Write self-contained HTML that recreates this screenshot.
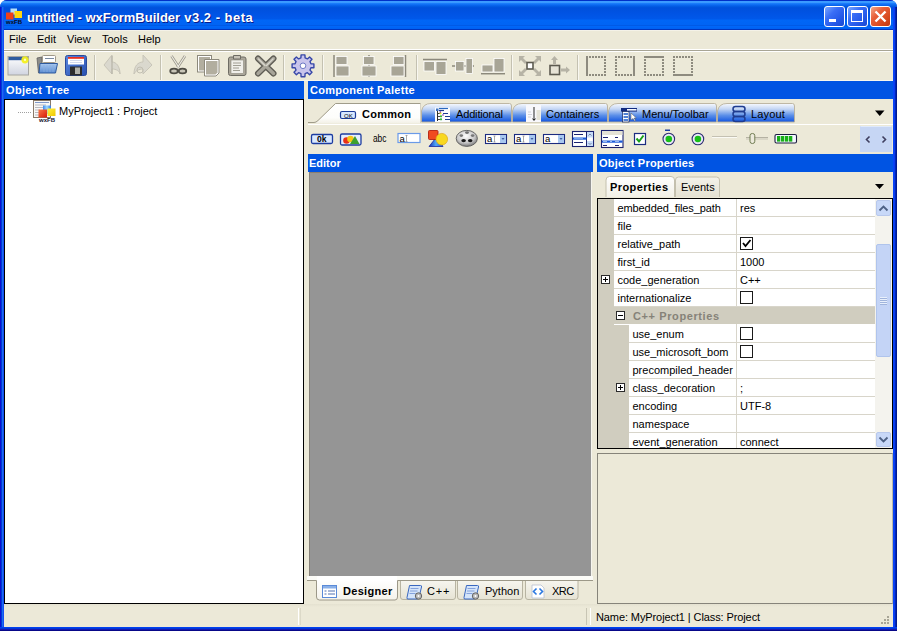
<!DOCTYPE html>
<html><head><meta charset="utf-8">
<style>
*{box-sizing:border-box;margin:0;padding:0}
html,body{width:897px;height:631px;overflow:hidden;background:#fff}
body{position:relative;font-family:"Liberation Sans",sans-serif;font-size:11px;line-height:13px;color:#000}
.a{position:absolute}
svg{position:absolute;overflow:visible}
.t{position:absolute;white-space:pre}
.b{font-weight:bold}
.hdr{position:absolute;height:18px;background:#0054E3}
.ht{position:absolute;color:#fff;font-weight:bold;white-space:pre;letter-spacing:0.33px}
.tsep{position:absolute;top:54px;width:2px;height:24px;border-left:1px solid #C9C6B6;border-right:1px solid #fff}
.row{position:absolute;left:614px;width:261px;height:18px;border-bottom:1px solid #D6D3C8;background:#fff}
.rn{position:absolute;left:617px;white-space:pre;line-height:17px}
.rv{position:absolute;left:740px;white-space:pre;line-height:17px}
.cb{position:absolute;left:740px;width:13px;height:13px;border:1px solid #1C1C1C;background:#fff}
</style></head>
<body>
<!-- window frame -->
<div class="a" style="left:0;top:0;width:897px;height:631px;background:#0A3ED6;border-radius:7px 7px 0 0"></div>
<div class="a" style="left:0;top:0;width:897px;height:30px;border-radius:7px 7px 0 0;background:linear-gradient(#0030C8 0px,#0030C8 1px,#3C9CFF 1px,#3A98FF 3px,#1A7CFA 3.5px,#0A68F0 5px,#0056DE 7px,#0050DC 8px,#0052E2 12px,#0058EA 19px,#0066F6 20px,#0064F4 24.5px,#005AE6 25.5px,#0066F8 26.5px,#0062F2 28.5px,#0036C0 29px,#0036C0 30px)"></div>
<div class="a" style="left:0;top:7px;width:4px;height:624px;background:linear-gradient(90deg,#0C10D0 0px,#0C10D0 1px,#0038D8 1px,#0038D8 2px,#1C6CF0 2px,#1C6CF0 3px,#1450F4 3px)"></div>
<div class="a" style="left:893px;top:7px;width:4px;height:624px;background:linear-gradient(90deg,#0844F8 0px,#0844F8 1px,#0A3CF0 1px,#0A3CF0 2px,#0028B8 2px,#0028B8 3px,#001A90 3px)"></div>
<div class="a" style="left:0;top:627px;width:897px;height:4px;background:linear-gradient(#0040F0 0px,#0040F0 1px,#0038D8 1px,#0038D8 2px,#1818B0 2px,#1818B0 3px,#080888 3px)"></div>
<div class="t b" style="left:27px;top:10px;font-size:13px;line-height:15px;color:#fff;text-shadow:1px 1px #0A1A8A">untitled - wxFormBuilder<span style="letter-spacing:0.5px"> v3.2 - beta</span></div>
<!-- app icon -->
<svg style="left:5px;top:8px" width="18" height="17" viewBox="0 0 18 17">
  <rect x="5.5" y="0.5" width="6.5" height="6" fill="#B8E0F8"/>
  <rect x="1" y="4.5" width="7.5" height="7" fill="#F04018"/>
  <rect x="9.5" y="3" width="7.5" height="7" fill="#FFD810"/>
  <text x="1" y="15.8" font-size="5" font-family="Liberation Sans" font-weight="bold" fill="#0A0A20" textLength="16" lengthAdjust="spacingAndGlyphs">wxFB</text>
</svg>
<!-- title buttons -->
<div class="a" style="left:824px;top:6px;width:21px;height:21px;border:1px solid #fff;border-radius:3px;background:linear-gradient(135deg,#7AA8FF,#3A6EF6 35%,#2458E8 70%,#1A48D0)"></div>
<div class="a" style="left:829px;top:19px;width:7px;height:3px;background:#fff"></div>
<div class="a" style="left:847px;top:6px;width:21px;height:21px;border:1px solid #fff;border-radius:3px;background:linear-gradient(135deg,#7AA8FF,#3A6EF6 35%,#2458E8 70%,#1A48D0)"></div>
<div class="a" style="left:851px;top:10px;width:12px;height:12px;border:1px solid #fff;border-top-width:3px"></div>
<div class="a" style="left:870px;top:6px;width:21px;height:21px;border:1px solid #fff;border-radius:3px;background:linear-gradient(135deg,#F4A888,#E8603A 35%,#D84A20 70%,#C03810)"></div>
<svg style="left:870px;top:6px" width="21" height="21"><path d="M5.5 5.5 L15.5 15.5 M15.5 5.5 L5.5 15.5" stroke="#fff" stroke-width="2.4"/></svg>

<!-- client -->
<div class="a" style="left:4px;top:30px;width:889px;height:597px;background:#ECE9D8"></div>
<div class="a" style="left:4px;top:30px;width:889px;height:1px;background:#F4F2E8"></div>
<div class="t" style="left:9px;top:33px">File</div>
<div class="t" style="left:37px;top:33px">Edit</div>
<div class="t" style="left:67px;top:33px">View</div>
<div class="t" style="left:102px;top:33px">Tools</div>
<div class="t" style="left:138px;top:33px">Help</div>
<div class="a" style="left:4px;top:49px;width:889px;height:1px;background:#fff"></div>
<div class="a" style="left:4px;top:50px;width:889px;height:1px;background:#A8A595"></div>
<div class="a" style="left:4px;top:51px;width:889px;height:1px;background:#fff"></div>

<!-- TOOLBAR -->
<svg style="left:0;top:0" width="700" height="82" viewBox="0 0 700 82">
 <defs>
  <linearGradient id="gNew" x1="0" y1="0" x2="0" y2="1"><stop offset="0" stop-color="#fff"/><stop offset="1" stop-color="#D0D4E0"/></linearGradient>
  <linearGradient id="gFold" x1="0" y1="0" x2="0" y2="1"><stop offset="0" stop-color="#A8C8F0"/><stop offset="1" stop-color="#5A8AD0"/></linearGradient>
  <linearGradient id="gSave" x1="0" y1="0" x2="1" y2="1"><stop offset="0" stop-color="#5A88E0"/><stop offset="1" stop-color="#2850B0"/></linearGradient>
 </defs>
 <!-- separators -->
 <g stroke-width="1">
  <path d="M94.5 55v25 M160.5 55v25 M283.5 55v25 M322.5 55v25 M416.5 55v25 M511.5 55v25 M577.5 55v25" stroke="#C4C1B1"/>
  <path d="M95.5 55v25 M161.5 55v25 M284.5 55v25 M323.5 55v25 M417.5 55v25 M512.5 55v25 M578.5 55v25" stroke="#F8F7F0"/>
 </g>
 <!-- new -->
 <rect x="8" y="56.5" width="20.5" height="18.5" fill="url(#gNew)" stroke="#A6A6A2"/>
 <rect x="8.5" y="57" width="19.5" height="3.2" fill="#2E5C9E"/>
 <circle cx="25" cy="59.8" r="3.6" fill="#F4F020" opacity="0.95"/>
 <circle cx="25" cy="59.8" r="1.2" fill="#FFFFC0"/>
 <!-- open -->
 <path d="M37 58 L42 57 L42 72 L38.5 73 Z" fill="#8C8C88" stroke="#606060" stroke-width="0.8"/>
 <rect x="42.5" y="55.5" width="13" height="7" rx="1" fill="#fff" stroke="#A09888"/>
 <path d="M45 58.5h9" stroke="#7A8AA0" stroke-width="1"/>
 <path d="M40 63.5 L57.5 63.5 L55.5 73 L39 73 Z" fill="url(#gFold)" stroke="#2F5A9E"/>
 <path d="M44 65v7 M47 65v7 M50 65v7 M53 65v7" stroke="#8AB0E0" stroke-width="0.7"/>
 <!-- save -->
 <rect x="65.5" y="55.5" width="21" height="20" rx="2" fill="url(#gSave)" stroke="#2A4A9A"/>
 <rect x="68" y="57" width="16" height="7.5" fill="#fff"/>
 <rect x="68" y="57" width="16" height="1.8" fill="#E83020"/>
 <path d="M70 60.5h12 M70 62.5h12" stroke="#C8D0E8" stroke-width="0.8"/>
 <rect x="70" y="66.5" width="12" height="9" fill="#2C2C2C"/>
 <rect x="75" y="67.5" width="5" height="6.5" fill="#B0B0A8"/>
 <!-- undo/redo disabled -->
 <path d="M112 55 L104 65 L112 74 L112 69 C116 69 120 71 120 74 C120 66 116 62 112 62 Z" fill="#DAD8CE" stroke="#C8C5B8"/>
 <path d="M112 56 L112 74" stroke="#B8B5A8" stroke-width="1.2"/>
 <path d="M143 55 L152 65 L143 74 L143 69 C139 69 135 71 134 74 C134 66 138 62 143 62 Z" fill="#DAD8CE" stroke="#C8C5B8"/>
 <circle cx="140" cy="70" r="3" fill="none" stroke="#C2BFB2"/>
 <!-- cut -->
 <path d="M171.5 56 L179 67.5 M185 56 L177.5 67.5" stroke="#9A978A" stroke-width="2.6"/>
 <path d="M171.5 56 L179 67.5 M185 56 L177.5 67.5" stroke="#F0EEE6" stroke-width="1.1"/>
 <ellipse cx="174" cy="71" rx="3.8" ry="2.4" fill="#C8C5B8" stroke="#4E4C44" stroke-width="1.7"/>
 <ellipse cx="182.5" cy="71" rx="3.8" ry="2.4" fill="#C8C5B8" stroke="#4E4C44" stroke-width="1.7"/>
 <!-- copy -->
 <rect x="197.5" y="55.5" width="14" height="16.5" fill="#fff" stroke="#8C897C"/>
 <rect x="199" y="57" width="11" height="13.5" fill="#B2AE9F"/>
 <path d="M204.5 59.5 L219 59.5 L219 73 L216 76 L204.5 76 Z" fill="#fff" stroke="#8C897C"/>
 <path d="M206 61 L217.5 61 L217.5 72.5 L215.5 74.5 L206 74.5 Z" fill="#B2AE9F"/>
 <!-- paste -->
 <rect x="228.5" y="57" width="17.5" height="18.5" rx="2" fill="#ABA79A" stroke="#6E6C64"/>
 <rect x="231" y="60" width="12.5" height="13.5" fill="#F0EFEA" stroke="#8C897C" stroke-width="0.6"/>
 <path d="M233.5 55.5 h7 v3.5 h-7 Z" fill="#C8C4B8" stroke="#6E6C64"/>
 <path d="M233 63h8 M233 65.5h8 M233 68h6 M233 70.5h7" stroke="#8C897C" stroke-width="0.8"/>
 <!-- delete -->
 <path d="M258 58.5 L273.5 73.5 M273.5 58.5 L258 73.5" stroke="#5E5C54" stroke-width="6" stroke-linecap="round"/>
 <path d="M258 58.5 L273.5 73.5 M273.5 58.5 L258 73.5" stroke="#A8A59A" stroke-width="3.4" stroke-linecap="round"/>
 <path d="M258.5 59 L265 65.5 M273 59 L266.5 65.5" stroke="#D8D6CC" stroke-width="1.4" stroke-linecap="round"/>
 <!-- gear -->
 <g transform="translate(303,65.8)">
  <path d="M-1.9 -10.9 L1.9 -10.9 L2.1 -7.9 L4.4 -6.9 L6.6 -8.9 L9 -6.5 L7 -4.3 L7.9 -2 L10.9 -1.9 L10.9 1.9 L7.9 2 L7 4.3 L9 6.5 L6.6 8.9 L4.4 6.9 L2.1 7.9 L1.9 10.9 L-1.9 10.9 L-2.1 7.9 L-4.4 6.9 L-6.6 8.9 L-9 6.5 L-7 4.3 L-7.9 2 L-10.9 1.9 L-10.9 -1.9 L-7.9 -2 L-7 -4.3 L-9 -6.5 L-6.6 -8.9 L-4.4 -6.9 L-2.1 -7.9 Z" fill="#C8C4EC" stroke="#3848A8" stroke-width="1.4" stroke-linejoin="round"/>
  <circle r="2.8" fill="#fff" stroke="#5060B8" stroke-width="0.8"/>
 </g>
 <!-- align left/center/right -->
 <g fill="#A8A596" stroke="#fff" stroke-width="0.8">
  <path d="M334 55v22" stroke="#8C897C" stroke-width="1.5"/>
  <rect x="336" y="56.5" width="11" height="8"/><rect x="336" y="66" width="13" height="10"/>
  <path d="M369 55v22" stroke="#8C897C" stroke-width="1.5"/>
  <rect x="363.5" y="56.5" width="10.5" height="8"/><rect x="362" y="66" width="14" height="10"/>
  <path d="M405.5 55v22" stroke="#8C897C" stroke-width="1.5"/>
  <rect x="393.5" y="56.5" width="10.5" height="8"/><rect x="391" y="66" width="13" height="10"/>
 </g>
 <!-- align top/middle/bottom -->
 <g fill="#A8A596" stroke="#fff" stroke-width="0.8">
  <path d="M423 59.5h24" stroke="#8C897C" stroke-width="1.5"/>
  <rect x="424" y="61.5" width="10.5" height="9.5"/><rect x="436" y="61.5" width="10" height="13"/>
  <path d="M452 66h22" stroke="#8C897C" stroke-width="1.5"/>
  <rect x="455.5" y="61.5" width="8.5" height="9.5"/><rect x="466" y="58.5" width="6.5" height="15"/>
  <path d="M481 73.7h24" stroke="#8C897C" stroke-width="1.5"/>
  <rect x="482" y="65" width="11" height="7"/><rect x="494" y="58.5" width="10" height="13.5"/>
 </g>
 <!-- expand -->
 <g fill="#B6B3A6">
  <path d="M519 56 L525 56 L523 58 L527 62 L525 64 L521 60 L519 62 Z"/>
  <path d="M541 56 L535 56 L537 58 L533 62 L535 64 L539 60 L541 62 Z"/>
  <path d="M519 76 L525 76 L523 74 L527 70 L525 68 L521 72 L519 70 Z"/>
  <path d="M541 76 L535 76 L537 74 L533 70 L535 68 L539 72 L541 70 Z"/>
 </g>
 <rect x="527" y="62.5" width="6" height="6.5" fill="#fff" stroke="#5C5A50" stroke-width="1.6"/>
 <!-- stretch -->
 <path d="M554.5 56 L558 60 L556 60 L556 64 L553 64 L553 60 L551 60 Z" fill="#B6B3A6"/>
 <path d="M570 70 L566 66.5 L566 68.5 L561 68.5 L561 71.5 L566 71.5 L566 73.5 Z" fill="#B6B3A6"/>
 <rect x="550" y="65.5" width="9.5" height="9" fill="#E6E3D6" stroke="#5C5A50" stroke-width="1.6"/>
 <!-- borders -->
 <g fill="#8E8B7F"><rect x="589" y="56" width="2" height="2"/><rect x="589" y="74" width="2" height="2"/><rect x="592" y="56" width="2" height="2"/><rect x="592" y="74" width="2" height="2"/><rect x="595" y="56" width="2" height="2"/><rect x="595" y="74" width="2" height="2"/><rect x="598" y="56" width="2" height="2"/><rect x="598" y="74" width="2" height="2"/><rect x="601" y="56" width="2" height="2"/><rect x="601" y="74" width="2" height="2"/><rect x="604" y="56" width="2" height="2"/><rect x="604" y="59" width="2" height="2"/><rect x="604" y="62" width="2" height="2"/><rect x="604" y="65" width="2" height="2"/><rect x="604" y="68" width="2" height="2"/><rect x="604" y="71" width="2" height="2"/><rect x="604" y="74" width="2" height="2"/><rect x="586" y="56" width="2" height="20"/><rect x="615" y="56" width="2" height="2"/><rect x="615" y="59" width="2" height="2"/><rect x="615" y="62" width="2" height="2"/><rect x="615" y="65" width="2" height="2"/><rect x="615" y="68" width="2" height="2"/><rect x="615" y="71" width="2" height="2"/><rect x="615" y="74" width="2" height="2"/><rect x="618" y="56" width="2" height="2"/><rect x="618" y="74" width="2" height="2"/><rect x="621" y="56" width="2" height="2"/><rect x="621" y="74" width="2" height="2"/><rect x="624" y="56" width="2" height="2"/><rect x="624" y="74" width="2" height="2"/><rect x="627" y="56" width="2" height="2"/><rect x="627" y="74" width="2" height="2"/><rect x="630" y="56" width="2" height="2"/><rect x="630" y="74" width="2" height="2"/><rect x="633" y="56" width="2" height="20"/><rect x="644" y="59" width="2" height="2"/><rect x="644" y="62" width="2" height="2"/><rect x="644" y="65" width="2" height="2"/><rect x="644" y="68" width="2" height="2"/><rect x="644" y="71" width="2" height="2"/><rect x="644" y="74" width="2" height="2"/><rect x="647" y="74" width="2" height="2"/><rect x="650" y="74" width="2" height="2"/><rect x="653" y="74" width="2" height="2"/><rect x="656" y="74" width="2" height="2"/><rect x="659" y="74" width="2" height="2"/><rect x="662" y="59" width="2" height="2"/><rect x="662" y="62" width="2" height="2"/><rect x="662" y="65" width="2" height="2"/><rect x="662" y="68" width="2" height="2"/><rect x="662" y="71" width="2" height="2"/><rect x="662" y="74" width="2" height="2"/><rect x="644" y="56" width="20" height="2"/><rect x="673" y="56" width="2" height="2"/><rect x="673" y="59" width="2" height="2"/><rect x="673" y="62" width="2" height="2"/><rect x="673" y="65" width="2" height="2"/><rect x="673" y="68" width="2" height="2"/><rect x="673" y="71" width="2" height="2"/><rect x="676" y="56" width="2" height="2"/><rect x="679" y="56" width="2" height="2"/><rect x="682" y="56" width="2" height="2"/><rect x="685" y="56" width="2" height="2"/><rect x="688" y="56" width="2" height="2"/><rect x="691" y="56" width="2" height="2"/><rect x="691" y="59" width="2" height="2"/><rect x="691" y="62" width="2" height="2"/><rect x="691" y="65" width="2" height="2"/><rect x="691" y="68" width="2" height="2"/><rect x="691" y="71" width="2" height="2"/><rect x="673" y="74" width="20" height="2"/></g>
</svg>


<div class="a" style="left:4px;top:80px;width:889px;height:1px;background:#F8F7EC"></div>
<!-- OBJECT TREE -->
<div class="hdr" style="left:4px;top:81px;width:300px"></div>
<div class="ht" style="left:6px;top:84px">Object Tree</div>
<div class="a" style="left:4px;top:99px;width:300px;height:505px;background:#fff;border:1px solid #000"></div>
<svg style="left:0;top:0" width="60" height="125" viewBox="0 0 60 125">
 <defs><linearGradient id="gBl" x1="0" y1="0" x2="1" y2="0"><stop offset="0" stop-color="#3C8CF0"/><stop offset="0.5" stop-color="#A0D8FF"/><stop offset="1" stop-color="#3078E0"/></linearGradient>
 <linearGradient id="gRd" x1="0" y1="0" x2="1" y2="1"><stop offset="0" stop-color="#F87848"/><stop offset="1" stop-color="#D81808"/></linearGradient>
 <linearGradient id="gYl" x1="0" y1="0" x2="1" y2="1"><stop offset="0" stop-color="#FFF040"/><stop offset="1" stop-color="#F0C800"/></linearGradient></defs>
 <path d="M18 112.5h14" stroke="#A0A0A0" stroke-dasharray="1 1"/>
 <rect x="33.5" y="100.5" width="17" height="17" fill="#F8F8F6" stroke="#8A7A6A"/>
 <path d="M35 102.5h14" stroke="#8098C8" stroke-width="1"/>
 <path d="M35 105h11 M35 107.5h9 M35 110h5 M35 112.5h4 M35 115h4" stroke="#B8B8C0" stroke-width="1"/>
 <rect x="43" y="105.5" width="8" height="8.5" fill="url(#gBl)"/>
 <rect x="38.5" y="109.5" width="8.5" height="8" fill="url(#gRd)"/>
 <rect x="47.5" y="108.5" width="8" height="7.5" fill="url(#gYl)"/>
 <text x="39" y="122.3" font-size="5.5" font-weight="bold" font-family="Liberation Sans" fill="#101030" textLength="16" lengthAdjust="spacingAndGlyphs">wxFB</text>
</svg>

<div class="t" style="left:59px;top:105px">MyProject1 : Project</div>

<!-- COMPONENT PALETTE -->
<div class="hdr" style="left:308px;top:81px;width:585px"></div>
<div class="ht" style="left:310px;top:84px;letter-spacing:0.28px">Component Palette</div>
<svg style="left:0;top:0" width="897" height="160" viewBox="0 0 897 160">
 <defs>
  <linearGradient id="gTab" x1="0" y1="0" x2="0" y2="1"><stop offset="0" stop-color="#F8FAFE"/><stop offset="0.3" stop-color="#C4D6F4"/><stop offset="0.65" stop-color="#5A8EE8"/><stop offset="0.92" stop-color="#2262E2"/><stop offset="1" stop-color="#1A58D8"/></linearGradient>
  <linearGradient id="gAct" x1="0" y1="0" x2="0" y2="1"><stop offset="0" stop-color="#FFFFFF"/><stop offset="0.7" stop-color="#FDFDFB"/><stop offset="1" stop-color="#F2F0E6"/></linearGradient>
 </defs>
 <!-- tab strip -->
 <path d="M308 124.5h585" stroke="#fff"/>
 <!-- inactive tabs -->
 <path d="M421.5 122 L421.5 111 Q423 103.5 431 103.5 L509.5 103.5 Q511.5 103.5 511.5 106 L511.5 122 Z" fill="url(#gTab)" stroke="#B8B09C" stroke-width="0.9"/>
 <path d="M512.5 122 L512.5 111 Q514 103.5 522 103.5 L605.5 103.5 Q607.5 103.5 607.5 106 L607.5 122 Z" fill="url(#gTab)" stroke="#B8B09C" stroke-width="0.9"/>
 <path d="M608.5 122 L608.5 111 Q610 103.5 618 103.5 L714.5 103.5 Q716.5 103.5 716.5 106 L716.5 122 Z" fill="url(#gTab)" stroke="#B8B09C" stroke-width="0.9"/>
 <path d="M717.5 122 L717.5 111 Q719 103.5 727 103.5 L792.5 103.5 Q794.5 103.5 794.5 106 L794.5 122 Z" fill="url(#gTab)" stroke="#B8B09C" stroke-width="0.9"/>
 <!-- active tab -->
 <path d="M308 123.5 L315 123.5 L335.5 104 L420.5 104 L420.5 123.5 Z" fill="url(#gAct)"/>
 <path d="M308 122.5 L314 122.5 Q316 122.5 318 120.5 L335.5 103.5 L420.5 103.5" fill="none" stroke="#A09C8A" stroke-width="1"/><path d="M420.5 104 V123" stroke="#D6D2C4"/>
 <!-- dropdown arrow -->
 <path d="M875 110.5 L884.5 110.5 L879.75 116 Z" fill="#000"/>
 <!-- tab icons -->
 <rect x="340.5" y="111.5" width="15" height="7" rx="1.5" fill="#D8E8FF" stroke="#1C3C98" stroke-width="1.2"/>
 <text x="344" y="117.6" font-size="6" font-family="Liberation Sans" fill="#000">OK</text>
 <g>
  <rect x="435" y="107.5" width="15" height="14.5" fill="#FBFCFF"/>
  <path d="M439 108.5h9" stroke="#2A68C0" stroke-width="1.2"/>
  <path d="M437.5 109v12" stroke="#303030" stroke-width="1"/>
  <rect x="436" y="108.5" width="2.5" height="2.5" fill="#3A70C0"/>
  <path d="M439 110.5h5" stroke="#1C3C90" stroke-width="1.2"/>
  <path d="M438 113.5h2.5 M438 116.5h2.5 M438 119.5h2" stroke="#303030" stroke-width="0.9"/>
  <circle cx="440.5" cy="113.3" r="1.1" fill="#E0E020"/><circle cx="441" cy="116.3" r="1.1" fill="#30B030"/><circle cx="441" cy="119.3" r="1.1" fill="#30B030"/>
  <circle cx="440.3" cy="112" r="0.8" fill="#8020A0"/><circle cx="443" cy="115" r="0.8" fill="#8020A0"/>
  <path d="M443 113.5h5 M445 116.5h5 M445 119.5h5" stroke="#1C3C90" stroke-width="1.1"/>
 </g>
 <g>
  <rect x="526" y="105" width="15" height="17" fill="#F8F8FC"/>
  <rect x="536.5" y="110" width="4" height="10" fill="#E6E4D8"/>
  <path d="M534 107 V118" stroke="#3A3A3A" stroke-width="1.1"/>
  <path d="M532 118.5 L536 118.5 L534 121 Z" fill="#222"/>
  <path d="M528 112h3 M528 114.5h4 M528 117h3" stroke="#C8C8D0" stroke-width="0.8"/>
 </g>
 <g>
  <rect x="621" y="108" width="16" height="3.6" fill="#102A80"/>
  <rect x="627" y="109" width="9.5" height="1.6" fill="#F4F8FF"/>
  <rect x="622.5" y="111.6" width="6.5" height="10.4" fill="#fff" stroke="#10205A" stroke-width="0.7"/>
  <path d="M623.5 114h4.5 M623.5 117h4.5 M623.5 120h4.5" stroke="#1A5AC8" stroke-width="1.4"/>
  <path d="M631 113 L631 120 L633 118.5 L634.5 121 L635.5 120.5 L634 118 L636.3 118 Z" fill="#fff" stroke="#555" stroke-width="0.5"/>
 </g>
 <g fill="none" stroke="#1F3C90" stroke-width="1.5">
  <rect x="733" y="106.5" width="12" height="5" rx="2.5"/>
  <rect x="733" y="111.5" width="12" height="5" rx="2.5"/>
  <rect x="733" y="116.5" width="12" height="5" rx="2.5"/>
 </g>
 <!-- component icons -->
 <rect x="311.5" y="134.5" width="21" height="9" rx="1.5" fill="#D8E8FF" stroke="#1C3CA0" stroke-width="1.3"/>
 <text x="317" y="141.8" font-size="8.3" font-weight="bold" font-family="Liberation Sans" fill="#000" textLength="9.5" lengthAdjust="spacingAndGlyphs">0k</text>
 <rect x="340.5" y="134" width="20.5" height="11" rx="1.5" fill="#E4EEFF" stroke="#1C3CA0" stroke-width="1.3"/>
 <circle cx="346.5" cy="140.5" r="3.3" fill="#E83018"/>
 <circle cx="350.5" cy="139" r="3.3" fill="#F8C818"/>
 <path d="M350 144 L355 136 L359.5 144 Z" fill="#3CA030"/>
 <text x="373" y="142" font-size="10" font-family="Liberation Sans" fill="#000" textLength="13.4" lengthAdjust="spacingAndGlyphs">abc</text>
 <rect x="398" y="133.5" width="22" height="9" fill="#fff" stroke="#6A9AE8" stroke-width="1.2"/>
 <text x="399.5" y="141.5" font-size="9.5" font-family="Liberation Sans" fill="#000">a</text>
 <path d="M406.5 135.5v6 M405.5 135.5h2 M405.5 141.5h2" stroke="#888" stroke-width="0.7"/>
 <!-- shapes -->
 <defs><linearGradient id="gTri" x1="0" y1="0" x2="1" y2="0"><stop offset="0" stop-color="#1830B0"/><stop offset="0.5" stop-color="#50A8F8"/><stop offset="1" stop-color="#2050D0"/></linearGradient>
 <radialGradient id="gReel" cx="0.45" cy="0.35" r="0.7"><stop offset="0" stop-color="#FFFFFF"/><stop offset="0.6" stop-color="#C8C8C8"/><stop offset="1" stop-color="#6A6A6A"/></radialGradient></defs>
 <path d="M429 146.5 L437 136.5 L443 146.5 Z" fill="url(#gTri)" stroke="#1828A0" stroke-width="0.8"/>
 <rect x="428.5" y="130.5" width="9.5" height="9" rx="1" fill="#F04A20" stroke="#B02010" stroke-width="0.9"/>
 <circle cx="441.8" cy="139.2" r="5.8" fill="#F8D820" stroke="#E0A818" stroke-width="0.7"/>
 <!-- film reel -->
 <ellipse cx="466.8" cy="138.4" rx="10.6" ry="8" fill="url(#gReel)" stroke="#5A5A5A" stroke-width="0.9"/>
 <ellipse cx="463.6" cy="140.6" rx="2.3" ry="1.7" fill="#181818"/><ellipse cx="470.2" cy="140.6" rx="2.3" ry="1.7" fill="#181818"/>
 <ellipse cx="467" cy="132.6" rx="2" ry="1.3" fill="#707070"/><ellipse cx="461.3" cy="135.6" rx="1.8" ry="1.3" fill="#787878"/><ellipse cx="472.6" cy="135.6" rx="1.8" ry="1.3" fill="#787878"/>
 <!-- combos -->
 <g>
  <rect x="485.5" y="134.5" width="21" height="9" fill="#fff" stroke="#1C2C80" stroke-width="1.1"/>
  <rect x="500" y="135" width="6" height="8" fill="#A8C8F0"/>
  <path d="M501.5 138 L504.5 138 L503 140 Z" fill="#4060A0"/>
  <text x="487" y="142.4" font-size="9.5" font-family="Liberation Sans" fill="#000">a</text>
  <path d="M494.5 136v6 M493.5 136h2 M493.5 142h2" stroke="#888" stroke-width="0.7"/>
 </g>
 <g>
  <rect x="514.5" y="134.5" width="21" height="9" fill="#fff" stroke="#1C2C80" stroke-width="1.1"/>
  <rect x="529" y="135" width="6" height="8" fill="#A8C8F0"/>
  <path d="M530.5 138 L533.5 138 L532 140 Z" fill="#4060A0"/>
  <text x="516" y="142.4" font-size="9.5" font-family="Liberation Sans" fill="#000">a</text>
  <path d="M523.5 136v6 M522.5 136h2 M522.5 142h2" stroke="#888" stroke-width="0.7"/>
 </g>
 <g>
  <rect x="543.5" y="134.5" width="21" height="9" fill="#fff" stroke="#1C2C80" stroke-width="1.1"/>
  <rect x="558" y="135" width="6" height="8" fill="#A8C8F0"/>
  <path d="M559.5 138 L562.5 138 L561 140 Z" fill="#4060A0"/>
  <text x="545" y="142.4" font-size="9.5" font-family="Liberation Sans" fill="#000">a</text>
 </g>
 <!-- listbox -->
 <rect x="572.5" y="131.5" width="21" height="15" fill="#fff" stroke="#1C2470" stroke-width="1.1"/>
 <path d="M586.5 132v14" stroke="#1C2470" stroke-width="1"/>
 <rect x="587" y="132" width="6" height="5.5" fill="#C8DCF8"/>
 <rect x="587" y="141" width="6" height="5" fill="#C8DCF8"/>
 <path d="M588.5 135.5 L590 134 L591.5 135.5 M588.5 143 L590 144.5 L591.5 143" fill="none" stroke="#607090" stroke-width="0.8"/>
 <path d="M574 134.5h9 M574 142.5h9" stroke="#1C2470" stroke-width="1"/>
 <rect x="573" y="137.5" width="13.5" height="2.2" fill="#1A5AD8"/>
 <path d="M574 138.6h9" stroke="#C8E0FF" stroke-width="0.6"/>
 <!-- listctrl -->
 <rect x="601.5" y="130.5" width="21.5" height="17" fill="#fff" stroke="#1C2470" stroke-width="1.1"/>
 <rect x="602" y="131" width="20.5" height="4" fill="#E4E2D6"/>
 <path d="M603 137.5h5 M615 137.5h3 M603 145.5h4 M615 145.5h4" stroke="#1C2470" stroke-width="1"/>
 <rect x="602" y="140.5" width="20.5" height="2.2" fill="#1A5AD8"/>
 <path d="M603 141.5h4 M610 141.5h2 M615 141.5h4" stroke="#D0E4FF" stroke-width="0.7"/>
 <!-- checkbox -->
 <rect x="634.5" y="133.5" width="11" height="11" fill="#fff" stroke="#1C2C80" stroke-width="1.2"/>
 <path d="M636.5 138.5 L639 141.5 L643.5 135.5" fill="none" stroke="#18A018" stroke-width="2"/>
 <!-- radios -->
 <circle cx="668.8" cy="139" r="5.8" fill="#E8E8F8" stroke="#2C2C70" stroke-width="1.1"/>
 <circle cx="668.8" cy="139" r="3.3" fill="#18C018"/>
 <rect x="665" y="129.5" width="5" height="1.5" fill="#1C3CA0"/>
 <circle cx="697.9" cy="139" r="5.8" fill="#E8E8F8" stroke="#2C2C70" stroke-width="1.1"/>
 <circle cx="697.9" cy="139" r="3.3" fill="#18C018"/>
 <!-- static line -->
 <path d="M712 136.5h25" stroke="#C4C1B2"/><path d="M712 137.5h25" stroke="#FAFAF4"/>
 <!-- slider -->
 <path d="M746 137.5h22" stroke="#B4B1A2"/><path d="M746 139h22" stroke="#C8C5B6"/>
 <rect x="750" y="133.5" width="4.8" height="10" rx="2.2" fill="#ECEADC" stroke="#6E7A50" stroke-width="1"/>
 <!-- gauge -->
 <rect x="775" y="134.5" width="21.5" height="8.5" rx="1.5" fill="#F4F8FF" stroke="#1C1C40" stroke-width="1.1"/>
 <g fill="#18B018"><rect x="777" y="136" width="3.3" height="5.6"/><rect x="781" y="136" width="3.3" height="5.6"/><rect x="785" y="136" width="3.3" height="5.6"/><rect x="789" y="136" width="3.3" height="5.6"/></g>
 <!-- nav buttons -->
 <rect x="860" y="126" width="32" height="26" fill="#C6D6F4"/>
 <path d="M860.5 126.5h31" stroke="#E0EAFA"/>
 <path d="M869.5 136.5 L866.5 139.5 L869.5 142.5" fill="none" stroke="#404060" stroke-width="1.6"/>
 <path d="M882.5 136.5 L885.5 139.5 L882.5 142.5" fill="none" stroke="#404060" stroke-width="1.6"/>
</svg>


<div class="t b" style="left:362px;top:108px;letter-spacing:0.25px">Common</div>
<div class="t" style="left:456px;top:108px;letter-spacing:-0.15px">Additional</div>
<div class="t" style="left:546px;top:108px">Containers</div>
<div class="t" style="left:642px;top:108px">Menu/Toolbar</div>
<div class="t" style="left:751px;top:108px;letter-spacing:0.15px">Layout</div>

<!-- EDITOR -->
<div class="hdr" style="left:308px;top:154px;width:285px"></div>
<div class="ht" style="left:309px;top:157px;letter-spacing:0">Editor</div>
<div class="a" style="left:309px;top:172px;width:282px;height:404px;background:#959595;border-top:1px solid #8A7E70;border-left:1px solid #858078"></div>


<!-- OBJECT PROPERTIES -->
<div class="hdr" style="left:597px;top:154px;width:296px"></div>
<div class="ht" style="left:599px;top:157px;letter-spacing:0.22px">Object Properties</div>

<div class="a" style="left:597px;top:198px;width:296px;height:251px;background:#fff;border:1px solid #000"></div>
<!-- editor notebook tabs -->
<svg style="left:0;top:0" width="897" height="631" viewBox="0 0 897 631">
 <defs>
  <linearGradient id="gEd" x1="0" y1="0" x2="0" y2="1"><stop offset="0" stop-color="#F6F5EE"/><stop offset="1" stop-color="#E6E3D4"/></linearGradient>
  <linearGradient id="gEdA" x1="0" y1="0" x2="0" y2="1"><stop offset="0" stop-color="#FFFFFF"/><stop offset="1" stop-color="#F4F2EA"/></linearGradient>
  <linearGradient id="gPT" x1="0" y1="0" x2="0" y2="1"><stop offset="0" stop-color="#FFFFFF"/><stop offset="1" stop-color="#F2F0E6"/></linearGradient>
  <linearGradient id="gPT2" x1="0" y1="0" x2="0" y2="1"><stop offset="0" stop-color="#F4F2EA"/><stop offset="1" stop-color="#E4E1D2"/></linearGradient>
 </defs>
 <rect x="307" y="576" width="286" height="4.5" fill="#FBFBF7"/>
 <path d="M591.5 172v404" stroke="#F6F5EE" stroke-width="1"/>
 <path d="M400.5 581 L400.5 597 Q400.5 599.5 403 599.5 L453 599.5 Q455.5 599.5 455.5 597 L455.5 581" fill="url(#gEd)" stroke="#B8B4A2"/>
 <path d="M457.5 581 L457.5 597 Q457.5 599.5 460 599.5 L520 599.5 Q522.5 599.5 522.5 597 L522.5 581" fill="url(#gEd)" stroke="#B8B4A2"/>
 <path d="M525.5 581 L525.5 597 Q525.5 599.5 528 599.5 L575.5 599.5 Q578 599.5 578 597 L578 581" fill="url(#gEd)" stroke="#B8B4A2"/>
 <path d="M316.5 580.5 L316.5 597 Q316.5 600 319.5 600 L395 600 Q397.5 600 397.5 597 L397.5 580.5 Z" fill="url(#gEdA)"/>
 <path d="M307 580.5 L316.5 580.5 L316.5 597 Q316.5 600 319.5 600 L395 600 Q397.5 600 397.5 597 L397.5 580.5 L593 580.5" fill="none" stroke="#9C9888"/>
 <rect x="317" y="576" width="80" height="5" fill="#FFFFFF"/>
 <!-- designer icon -->
 <rect x="322.5" y="585.5" width="14" height="12" fill="#fff" stroke="#5A8AD8"/>
 <rect x="323" y="586" width="13" height="2.5" fill="#8AB0E8"/>
 <path d="M324.5 591h2 M324.5 594h2 M328 591h7 M328 594h7" stroke="#5070B0" stroke-width="1"/>
 <!-- cpp/python icons -->
 <g transform="translate(407,0)">
  <defs></defs>
  <path d="M2.5 585.5 L13.5 585.5 Q15 585.5 14.5 587 L12 597.5 Q11.5 599 10 599 L1 599 Q-0.5 599 0 597.5 Z" fill="#D4E4FA" stroke="#3A68C0" stroke-width="1"/>
  <path d="M3.5 588.5h8 M3 591h7.5 M2.5 593.5h6" stroke="#7A9AD8" stroke-width="0.9"/>
  <circle cx="11.5" cy="596" r="3.2" fill="#B8B8B8" stroke="#5A5A5A" stroke-width="0.9"/>
  <circle cx="11.5" cy="596" r="1" fill="#fff"/>
 </g>
 <g transform="translate(464,0)">
  <defs></defs>
  <path d="M2.5 585.5 L13.5 585.5 Q15 585.5 14.5 587 L12 597.5 Q11.5 599 10 599 L1 599 Q-0.5 599 0 597.5 Z" fill="#D4E4FA" stroke="#3A68C0" stroke-width="1"/>
  <path d="M3.5 588.5h8 M3 591h7.5 M2.5 593.5h6" stroke="#7A9AD8" stroke-width="0.9"/>
  <circle cx="11.5" cy="596" r="3.2" fill="#B8B8B8" stroke="#5A5A5A" stroke-width="0.9"/>
  <circle cx="11.5" cy="596" r="1" fill="#fff"/>
 </g>
 <g>
  <path d="M532 585 L541 585 L544 588 L544 598 L532 598 Z" fill="#fff" stroke="#B8C0D0" stroke-width="0.8"/>
  <path d="M536.5 588.5 L533.5 591.5 L536.5 594.5 M539.5 588.5 L542.5 591.5 L539.5 594.5" fill="none" stroke="#2A78E0" stroke-width="1.6"/>
 </g>
 <!-- property notebook tabs -->
 <path d="M606 197 L606 180 Q606 176.5 609.5 176.5 L671 176.5 Q674.5 176.5 674.5 180 L674.5 197" fill="url(#gPT)" stroke="#C4C0AE"/>
 <path d="M675.5 197 L675.5 180 Q675.5 177 678.5 177 L716.5 177 Q719.5 177 719.5 180 L719.5 197" fill="url(#gPT2)" stroke="#C4C0AE"/>
 <path d="M875 184 L884 184 L879.5 189 Z" fill="#000"/>
 <!-- property grid -->
 <rect x="598" y="199" width="277" height="249" fill="#fff"/>
 <rect x="598" y="199" width="16" height="249" fill="#D0CDBF"/>
 <rect x="614" y="307" width="261" height="17" fill="#D0CDBF"/>
 <rect x="614" y="325" width="15" height="123" fill="#D0CDBF"/>
 <g stroke="#D8D5CA" stroke-width="1">
  <path d="M614 216.5h261 M614 234.5h261 M614 252.5h261 M614 270.5h261 M614 288.5h261 M614 306.5h261"/>
  <path d="M629 342.5h246 M629 360.5h246 M629 378.5h246 M629 396.5h246 M629 414.5h246 M629 432.5h246"/>
  <path d="M736.5 199v108 M736.5 324v124"/>
 </g>
 <!-- expanders -->
 <g fill="#fff" stroke="#2A2A2A" stroke-width="1">
  <rect x="601.5" y="275.5" width="8" height="8"/>
  <rect x="616.5" y="311.5" width="8" height="8"/>
  <rect x="616.5" y="383.5" width="8" height="8"/>
 </g>
 <path d="M603 279.5h5 M605.5 277v5 M618 315.5h5 M618 387.5h5 M620.5 385v5" stroke="#000"/>
 <!-- checkboxes -->
 <g fill="#fff" stroke="#1A1A1A" stroke-width="1">
  <rect x="740.5" y="237.5" width="12" height="12"/>
  <rect x="740.5" y="291.5" width="12" height="12"/>
  <rect x="740.5" y="327.5" width="12" height="12"/>
  <rect x="740.5" y="345.5" width="12" height="12"/>
 </g>
 <path d="M743 243 L745.5 246 L750.5 240" fill="none" stroke="#000" stroke-width="1.8"/>
 <!-- scrollbar -->
 <rect x="875" y="199" width="17" height="249" fill="#F4F3EE"/>
 <rect x="876.5" y="200.5" width="14" height="15" rx="1.5" fill="#C8D8F8" stroke="#B8C8EC"/>
 <path d="M879.5 210.5 L883.5 206.5 L887.5 210.5" fill="none" stroke="#4D6185" stroke-width="1.8"/>
 <rect x="876.5" y="244.5" width="14" height="112" rx="1.5" fill="#C4D4F6" stroke="#B0C4EC"/>
 <path d="M880 297.5h7 M880 299.5h7 M880 301.5h7 M880 303.5h7" stroke="#E8F0FC"/>
 <path d="M880 298.5h7 M880 300.5h7 M880 302.5h7 M880 304.5h7" stroke="#A0B4DC"/>
 <rect x="876.5" y="432.5" width="14" height="14" rx="1.5" fill="#C8D8F8" stroke="#B8C8EC"/>
 <path d="M879.5 437.5 L883.5 441.5 L887.5 437.5" fill="none" stroke="#4D6185" stroke-width="1.8"/>
</svg>
<div class="t b" style="left:343px;top:585px;letter-spacing:0.3px">Designer</div>
<div class="t" style="left:427px;top:585px;letter-spacing:0.8px">C++</div>
<div class="t" style="left:485px;top:585px">Python</div>
<div class="t" style="left:552px;top:585px;letter-spacing:-0.5px">XRC</div>
<div class="t b" style="left:610px;top:181px;letter-spacing:0.4px">Properties</div>
<div class="t" style="left:681px;top:181px">Events</div>
<div class="t" style="left:617.5px;top:202px;letter-spacing:-0.1px">embedded_files_path</div>
<div class="t" style="left:740px;top:202px">res</div>
<div class="t" style="left:617.5px;top:220px">file</div>
<div class="t" style="left:617.5px;top:238px">relative_path</div>
<div class="t" style="left:617.5px;top:256px">first_id</div>
<div class="t" style="left:740px;top:256px">1000</div>
<div class="t" style="left:617.5px;top:274px">code_generation</div>
<div class="t" style="left:740px;top:274px">C++</div>
<div class="t" style="left:617.5px;top:292px">internationalize</div>
<div class="t b" style="left:633px;top:310px;color:#858278;letter-spacing:0.6px">C++ Properties</div>
<div class="t" style="left:632.5px;top:328px">use_enum</div>
<div class="t" style="left:632.5px;top:346px">use_microsoft_bom</div>
<div class="t" style="left:632.5px;top:364px">precompiled_header</div>
<div class="t" style="left:632.5px;top:382px">class_decoration</div>
<div class="t" style="left:740px;top:382px">;</div>
<div class="t" style="left:632.5px;top:400px">encoding</div>
<div class="t" style="left:740px;top:400px">UTF-8</div>
<div class="t" style="left:632.5px;top:418px">namespace</div>
<div class="t" style="left:632.5px;top:436px">event_generation</div>
<div class="t" style="left:740px;top:436px">connect</div>

<div class="a" style="left:597px;top:453px;width:296px;height:151px;background:#ECE9D8;border:1px solid #86847A;border-right-color:#B8B5A8"></div>

<!-- STATUS -->
<div class="a" style="left:4px;top:604px;width:889px;height:23px;background:linear-gradient(#E4E1D0,#ECE9D8 3px)"></div>
<div class="t" style="left:596px;top:611px;letter-spacing:-0.1px">Name: MyProject1 | Class: Project</div>
<div class="a" style="left:298px;top:608px;width:1px;height:17px;background:#fff"></div>
<div class="a" style="left:300px;top:608px;width:1px;height:17px;background:#DCD9C8"></div>
<div class="a" style="left:586px;top:608px;width:1px;height:17px;background:#C8C5B4"></div>
<div class="a" style="left:590px;top:608px;width:1px;height:17px;background:#fff"></div>
<svg style="left:878px;top:613px" width="14" height="14"><g fill="#A8A596"><rect x="9" y="3" width="2" height="2"/><rect x="6" y="6" width="2" height="2"/><rect x="9" y="6" width="2" height="2"/><rect x="3" y="9" width="2" height="2"/><rect x="6" y="9" width="2" height="2"/><rect x="9" y="9" width="2" height="2"/></g></svg>
</body></html>
